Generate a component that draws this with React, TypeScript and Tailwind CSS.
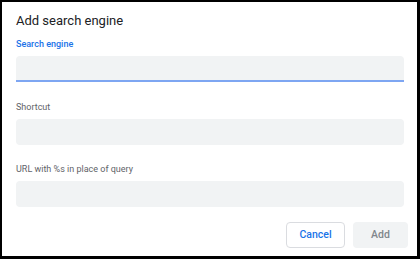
const fields = [
  { label: "Search engine", focused: true, gap: "mt-0" },
  { label: "Shortcut", focused: false, gap: "mt-[19px]" },
  { label: "URL with %s in place of query", focused: false, gap: "mt-[18px]" },
];

const AddSearchEngineDialog = () => {
  return (
    <div
      className="w-[420px] h-[259px] bg-white border-black border-l-2 border-t-2 border-r-[3px] border-b-[3px] overflow-hidden"
      style={{ fontFamily: "Roboto, 'Liberation Sans', sans-serif" }}
    >
      <div className="pl-[14px] pr-[9px] pt-[11px]">
        <h2 className="text-[13px] leading-[16px] text-[#202124]">Add search engine</h2>

        <div className="mt-[9px] pr-[4px]">
          {fields.map((field) => (
            <div key={field.label} className={field.gap}>
              <label
                className={
                  field.focused
                    ? "block text-[9px] leading-[12px] font-medium text-[#1a73e8]"
                    : "block text-[9px] leading-[12px] text-[#5f6368]"
                }
              >
                {field.label}
              </label>
              <div
                className={
                  field.focused
                    ? "mt-[6px] h-[26px] rounded-t-[4px] bg-[#f1f3f4] border-b-2 border-[#7ea6f2]"
                    : "mt-[6px] h-[26px] rounded-[4px] bg-[#f1f3f4]"
                }
              />
            </div>
          ))}
        </div>

        <div className="mt-[15px] flex justify-end gap-[8px]">
          <button className="w-[59px] h-[26px] rounded-[4px] border border-[#dadce0] bg-white text-[10.5px] font-medium text-[#1a73e8]">
            Cancel
          </button>
          <button className="w-[55px] h-[26px] rounded-[4px] bg-[#f1f3f4] text-[10.5px] font-medium text-[#80868b]">
            Add
          </button>
        </div>
      </div>
    </div>
  );
};

export default function App() {
  return <AddSearchEngineDialog />;
}
